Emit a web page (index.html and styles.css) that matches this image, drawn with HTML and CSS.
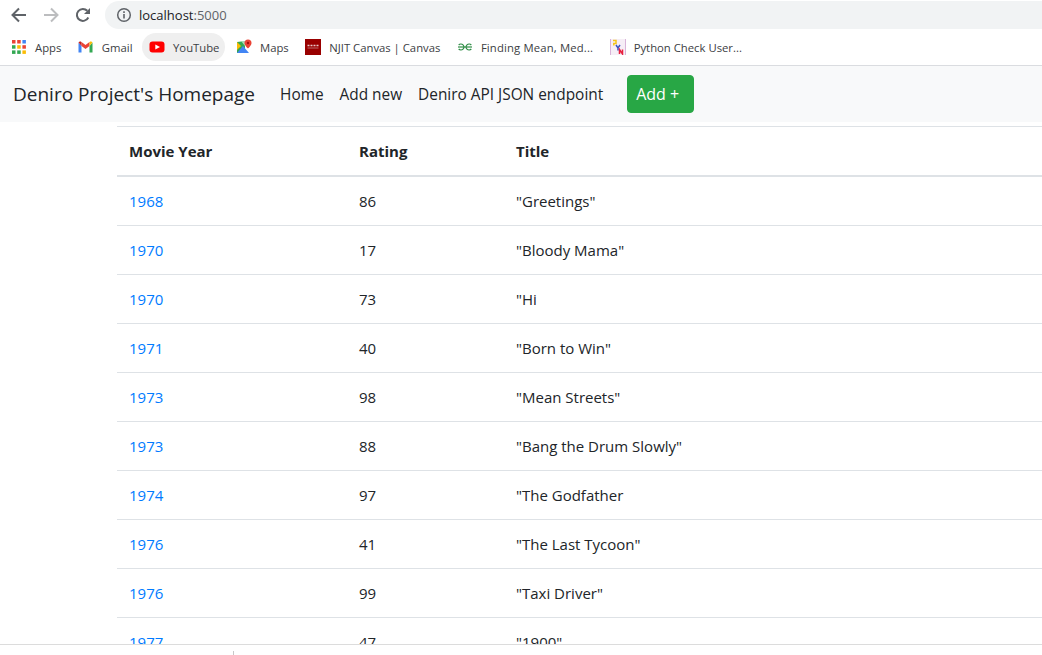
FILE: index.html
```html
<!DOCTYPE html>
<html lang="en">
<head>
  <meta charset="UTF-8" />
  <meta name="viewport" content="width=device-width, initial-scale=1.0"/>
  <title>Deniro Project's Homepage</title>
  <link rel="stylesheet" href="styles.css">
</head>
<body>
  <!-- browser chrome -->
  <div class="toolbar">
    <svg class="tool-icon back" width="16" height="16" viewBox="0 0 16 16"><path d="M15 8H2M8 1.500L1.500 8 8 14.500" fill="none" stroke="#5f6368" stroke-width="2"/></svg>
    <svg class="tool-icon forward" width="16" height="16" viewBox="0 0 16 16"><path d="M1 8h13M8 1.500L14.500 8 8 14.500" fill="none" stroke="#bcbdbf" stroke-width="2"/></svg>
    <svg class="tool-icon reload" width="16" height="16" viewBox="0 0 16 16"><path d="M13.300 10.500A6 6 0 1 1 12.300 3.800" fill="none" stroke="#5f6368" stroke-width="2"/><path d="M15 1v6H9z" fill="#5f6368"/></svg>
    <div class="address">
      <svg width="16" height="16" viewBox="0 0 16 16"><circle cx="8" cy="8" r="6.300" fill="none" stroke="#5f6368" stroke-width="1.500"/><path d="M8 7v4.500M8 4.300v1.600" stroke="#5f6368" stroke-width="1.600"/></svg>
      <span class="host">localhost</span><span class="port">:5000</span>
    </div>
  </div>
  <div class="bookmarks">
    <a class="bookmark">
      <svg width="16" height="16" viewBox="0 0 16 16">
        <rect x="1" y="1" width="3.500" height="3.500" fill="#ea4335"/><rect x="6.200" y="1" width="3.500" height="3.500" fill="#ea4335"/><rect x="11.400" y="1" width="3.500" height="3.500" fill="#4285f4"/>
        <rect x="1" y="6.200" width="3.500" height="3.500" fill="#34a853"/><rect x="6.200" y="6.200" width="3.500" height="3.500" fill="#fbbc05"/><rect x="11.400" y="6.200" width="3.500" height="3.500" fill="#ea4335"/>
        <rect x="1" y="11.400" width="3.500" height="3.500" fill="#34a853"/><rect x="6.200" y="11.400" width="3.500" height="3.500" fill="#34a853"/><rect x="11.400" y="11.400" width="3.500" height="3.500" fill="#fbbc05"/>
      </svg>
      Apps
    </a>
    <a class="bookmark">
      <svg width="16" height="16" viewBox="0 0 16 16">
        <path d="M0.500 3.500v10h3V7z" fill="#4285f4"/><path d="M14.500 3.500v10h-3V7z" fill="#34a853"/>
        <path d="M3.500 7l4 3 4-3V3l-4 3-4-3z" fill="#ea4335"/><path d="M0.500 3.500l3 3.500V3L2 2.300z" fill="#c5221f"/><path d="M14.500 3.500l-3 3.500V3l1.500-.7z" fill="#fbbc05"/>
      </svg>
      Gmail
    </a>
    <a class="bookmark active">
      <svg width="16" height="16" viewBox="0 0 16 16"><rect x="0.500" y="2.500" width="15" height="11" rx="3" fill="#f00"/><path d="M6.300 5.500L11 8l-4.700 2.500z" fill="#fff"/></svg>
      YouTube
    </a>
    <a class="bookmark">
      <svg width="16" height="16" viewBox="0 0 16 16">
        <path d="M1 3l8-1v12H1z" fill="#34a853"/><path d="M1 14l6-7 6 7z" fill="#4285f4"/><path d="M1 3l4 4-4 4z" fill="#fbbc05"/><path d="M5 2h4v5z" fill="#a8dab5"/>
        <path d="M12 0.500a3.500 3.500 0 0 0-3.500 3.500c0 2.500 3.500 5.500 3.500 5.500s3.500-3 3.500-5.500A3.500 3.500 0 0 0 12 .5z" fill="#ea4335"/><circle cx="12" cy="4" r="1.200" fill="#a50e0e"/>
      </svg>
      Maps
    </a>
    <a class="bookmark">
      <svg width="16" height="16" viewBox="0 0 16 16"><rect width="16" height="16" fill="#990000"/><path d="M2.500 6.500h11" stroke="#e9c9c9" stroke-width="1.500" stroke-dasharray="2 1"/><path d="M2.500 9h11" stroke="#b96a6a" stroke-width="1"/></svg>
      NJIT Canvas | Canvas
    </a>
    <a class="bookmark bookmark-wide">
      <svg width="16" height="16" viewBox="0 0 16 16"><g fill="none" stroke="#2f8d46" stroke-width="1.200"><path d="M1 8h14"/><path d="M1.700 6A3 3 0 1 1 1.700 10"/><path d="M14.300 6A3 3 0 1 0 14.300 10"/></g></svg>
      Finding Mean, Med...
    </a>
    <a class="bookmark">
      <svg width="16" height="16" viewBox="0 0 16 16"><rect width="16" height="16" fill="#f6eef6"/><path d="M0.500 0v16M15.500 0v16" stroke="#d9b4d9"/><path d="M3 1.500h3v3H3.800v2" fill="none" stroke="#f5c518" stroke-width="1.500"/><path d="M6 6l2 3 2-3M8 9v2.500" fill="none" stroke="#3553c4" stroke-width="1.500"/><path d="M9.500 15v-4.500l3 4.500v-4.500" fill="none" stroke="#e8213f" stroke-width="1.500"/></svg>
      Python Check User...
    </a>
  </div>

  <!-- the page itself -->
  <nav class="navbar">
    <a class="brand">Deniro Project's Homepage</a>
    <ul class="nav-links">
      <li><a>Home</a></li>
      <li><a>Add new</a></li>
      <li><a>Deniro API JSON endpoint</a></li>
    </ul>
    <button class="btn-add">Add +</button>
  </nav>
  <main class="content">
    <table class="movies">
      <thead>
        <tr><th class="col-year">Movie Year</th><th class="col-rating">Rating</th><th>Title</th></tr>
      </thead>
      <tbody>
        <tr class="first-row"><td><a>1968</a></td><td>86</td><td>"Greetings"</td></tr>
        <tr><td><a>1970</a></td><td>17</td><td>"Bloody Mama"</td></tr>
        <tr><td><a>1970</a></td><td>73</td><td>"Hi</td></tr>
        <tr><td><a>1971</a></td><td>40</td><td>"Born to Win"</td></tr>
        <tr><td><a>1973</a></td><td>98</td><td>"Mean Streets"</td></tr>
        <tr><td><a>1973</a></td><td>88</td><td>"Bang the Drum Slowly"</td></tr>
        <tr><td><a>1974</a></td><td>97</td><td>"The Godfather</td></tr>
        <tr><td><a>1976</a></td><td>41</td><td>"The Last Tycoon"</td></tr>
        <tr><td><a>1976</a></td><td>99</td><td>"Taxi Driver"</td></tr>
        <tr><td><a>1977</a></td><td>47</td><td>"1900"</td></tr>
      </tbody>
    </table>
  </main>
  <div class="statusbar"><span class="tick"></span></div>
</body>
</html>
```
FILE: styles.css
```css
html, body {
  height: 100%;
}
body {
  margin: 0;
  display: flex;
  flex-direction: column;
  height: 100vh;
  overflow: hidden;
  background-color: #fff;
  color: #212529;
  font-family: "Open Sans", "Noto Sans", sans-serif;
  font-size: 15px;
}

/* browser chrome */
.toolbar {
  display: flex;
  align-items: center;
  height: 29px;
  padding-top: 1px;
  box-sizing: border-box;
  flex-shrink: 0;
}
.tool-icon {
  flex-shrink: 0;
}
.back { margin-left: 11px; }
.forward { margin-left: 16px; }
.reload { margin-left: 16px; }
.address {
  flex: 1;
  display: flex;
  align-items: center;
  height: 28px;
  margin-left: 14px;
  padding-left: 11px;
  background-color: #f1f3f4;
  border-radius: 14px 0 0 14px;
  font-size: 13px;
}
.address svg {
  margin-right: 7px;
}
.host { color: #202124; }
.port { color: #5f6368; }

.bookmarks {
  display: flex;
  align-items: center;
  height: 37px;
  padding-left: 4px;
  box-sizing: border-box;
  border-bottom: 1px solid #dadce0;
  flex-shrink: 0;
  font-size: 11.3px;
  color: #3c4043;
}
.bookmark {
  display: flex;
  align-items: center;
  gap: 8px;
  height: 28px;
  padding: 0 6px 0 7px;
  margin-right: 3.5px;
  border-radius: 14px;
  white-space: nowrap;
}
.bookmark.active {
  background-color: #efefef;
}
.bookmark-wide {
  letter-spacing: 0.15px;
}

/* navbar */
.navbar {
  display: flex;
  align-items: center;
  height: 56px;
  padding: 0 13px;
  box-sizing: border-box;
  background-color: #f8f9fa;
  flex-shrink: 0;
}
.brand {
  font-size: 19px;
  margin-right: 25px;
  white-space: nowrap;
}
.nav-links {
  display: flex;
  gap: 16px;
  list-style: none;
  margin: 0;
  padding: 0;
  font-size: 15.4px;
  white-space: nowrap;
}
.btn-add {
  margin: 0 0 1px 24px;
  height: 38px;
  padding: 0 14px 0 8px;
  border: 1px solid #28a745;
  border-radius: 4px;
  background-color: #28a745;
  color: #fff;
  font-family: inherit;
  font-size: 16px;
}

/* table */
.content {
  flex: 1;
  min-height: 0;
  overflow: hidden;
  padding: 4px 0 0 117px;
}
.movies {
  width: 1000px;
  table-layout: fixed;
  border-collapse: collapse;
}
.movies th, .movies td {
  padding: 12px;
  height: 49px;
  box-sizing: border-box;
  text-align: left;
  border-top: 1px solid #dee2e6;
}
.movies thead th {
  border-bottom: 2px solid #dee2e6;
  height: 49px;
}
.movies .first-row td {
  height: 50px;
}
.col-year { width: 230px; }
.col-rating { width: 157px; }
.movies a {
  color: #007bff;
}

.statusbar {
  height: 11px;
  flex-shrink: 0;
  position: relative;
  box-sizing: border-box;
  border-top: 1px solid #dcdcdc;
  background-color: #fff;
}
.tick {
  position: absolute;
  left: 233px;
  top: 6px;
  width: 1px;
  height: 4px;
  background-color: #c8c8c8;
}
```
